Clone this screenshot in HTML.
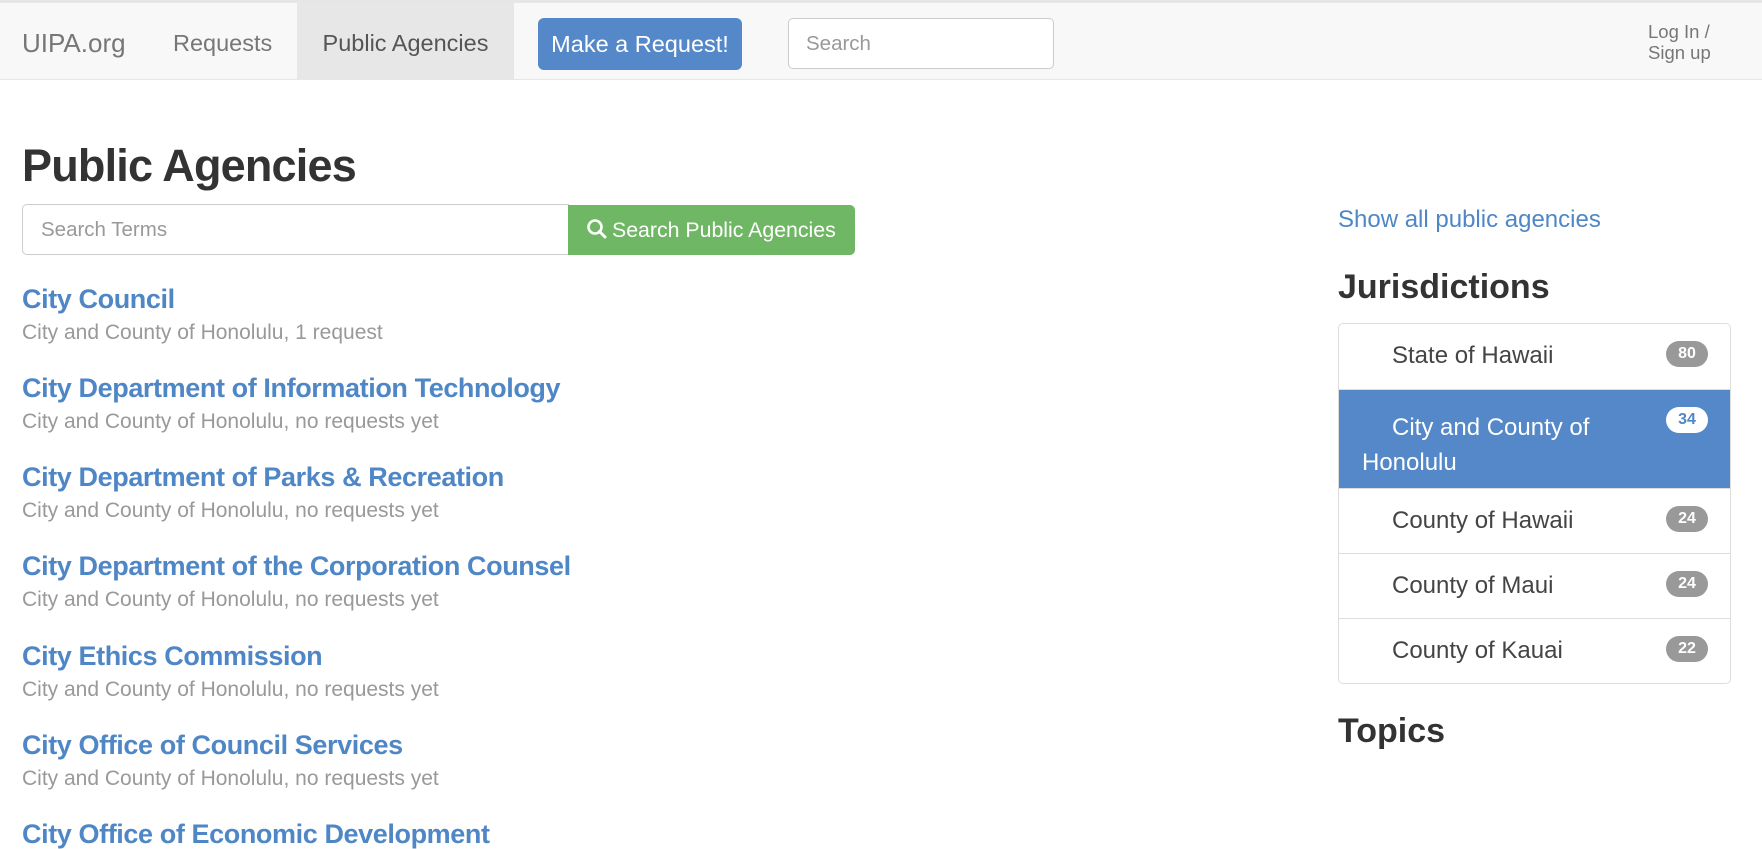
<!DOCTYPE html>
<html><head><meta charset="utf-8"><style>
*{box-sizing:border-box;margin:0;padding:0}
body{width:1762px;height:834px;overflow:hidden;font-family:"Liberation Sans",Arial,sans-serif;background:#fff;position:relative;color:#333}
.top{position:absolute;left:0;top:0;width:1762px;height:3px;background:#e6e6e8}
.nav{position:absolute;left:0;top:3px;width:1762px;height:77px;background:#f8f8f8;border-bottom:1px solid #e7e7e7}
.nav .t{position:absolute;top:2px;height:76px;line-height:76px;font-size:23.5px;color:#777}
.act{top:0!important;background:#e7e7e7;color:#555!important;line-height:80px!important}
.btn{position:absolute;left:538px;top:15px;width:204px;height:52px;background:#5488c8;border-radius:6px;color:#fff;font-size:23.5px;line-height:52px;text-align:center}
.srch{position:absolute;left:788px;top:15px;width:266px;height:51px;border:1px solid #ccc;border-radius:5px;background:#fff;font-size:20.5px;color:#999;line-height:49px;padding-left:17px}
.login{position:absolute;left:1648px;top:18px;font-size:18.5px;color:#777;line-height:21px}
h1{position:absolute;left:22px;top:140px;font-size:45px;font-weight:bold;color:#333;letter-spacing:-0.8px}
.in{position:absolute;left:22px;top:204px;width:547px;height:51px;border:1px solid #ccc;border-radius:5px 0 0 5px;font-size:20.5px;color:#999;line-height:49px;padding-left:18px}
.gb{position:absolute;left:568px;top:205px;width:287px;height:50px;background:#6fb764;border-radius:0 5px 5px 0;color:#fff;font-size:21.3px;line-height:50px;padding-left:18px;white-space:nowrap}
.item{position:absolute;left:22px}
.item a{display:block;font-size:27px;font-weight:bold;color:#4f87c6;letter-spacing:-0.4px;line-height:30px}
.item div{font-size:21px;color:#999;line-height:24px;margin-top:7px}
.show{position:absolute;left:1338px;top:206px;font-size:24px;color:#4f87c6}
h2{position:absolute;left:1338px;font-size:34px;font-weight:bold;color:#333}
.list{position:absolute;left:1338px;top:323px;width:393px;border:1px solid #ddd;border-radius:5px;overflow:hidden}
.row{position:relative;height:65px;border-top:1px solid #ddd;font-size:24px;color:#444;padding:20px 0 0 53px;line-height:24px}
.row:first-child{border-top:none}
.row.a{height:99px;background:#5488c8;color:#fff;padding:20px 20px 0 53px;line-height:35px}
.badge{position:absolute;right:22px;top:17px;width:42px;height:26px;border-radius:13px;background:#999;color:#fff;font-size:16px;font-weight:bold;text-align:center;line-height:26px}
.a .badge{background:#fff;color:#4f87c6}
</style></head><body>
<div class="top"></div>
<div class="nav">
<span class="t" style="left:22px;font-size:26px">UIPA.org</span>
<span class="t" style="left:173px">Requests</span>
<span class="t act" style="left:297px;width:217px;text-align:center">Public Agencies</span>
<div class="btn">Make a Request!</div>
<div class="srch">Search</div>
<div class="login">Log In /<br>Sign up</div>
</div>
<h1>Public Agencies</h1>
<div class="in">Search Terms</div>
<div class="gb"><svg width="22" height="22" viewBox="0 0 22 22" style="vertical-align:-3px;margin-right:4px"><circle cx="9" cy="9" r="6.5" stroke="#fff" stroke-width="2.6" fill="none"/><path d="M13.5 13.5L19 19" stroke="#fff" stroke-width="3" stroke-linecap="round"/></svg>Search Public Agencies</div>

<div class="item" style="top:284px"><a>City Council</a><div>City and County of Honolulu, 1 request</div></div>
<div class="item" style="top:373px"><a>City Department of Information Technology</a><div>City and County of Honolulu, no requests yet</div></div>
<div class="item" style="top:462px"><a>City Department of Parks &amp; Recreation</a><div>City and County of Honolulu, no requests yet</div></div>
<div class="item" style="top:551px"><a>City Department of the Corporation Counsel</a><div>City and County of Honolulu, no requests yet</div></div>
<div class="item" style="top:641px"><a>City Ethics Commission</a><div>City and County of Honolulu, no requests yet</div></div>
<div class="item" style="top:730px"><a>City Office of Council Services</a><div>City and County of Honolulu, no requests yet</div></div>
<div class="item" style="top:819px"><a>City Office of Economic Development</a></div>

<div class="show">Show all public agencies</div>
<h2 style="top:268px">Jurisdictions</h2>
<div class="list">
<div class="row">State of Hawaii<span class="badge">80</span></div>
<div class="row a">City and County of<br><span style="margin-left:-30px">Honolulu</span><span class="badge">34</span></div>
<div class="row">County of Hawaii<span class="badge">24</span></div>
<div class="row">County of Maui<span class="badge">24</span></div>
<div class="row">County of Kauai<span class="badge">22</span></div>
</div>
<h2 style="top:712px">Topics</h2>
</body></html>
